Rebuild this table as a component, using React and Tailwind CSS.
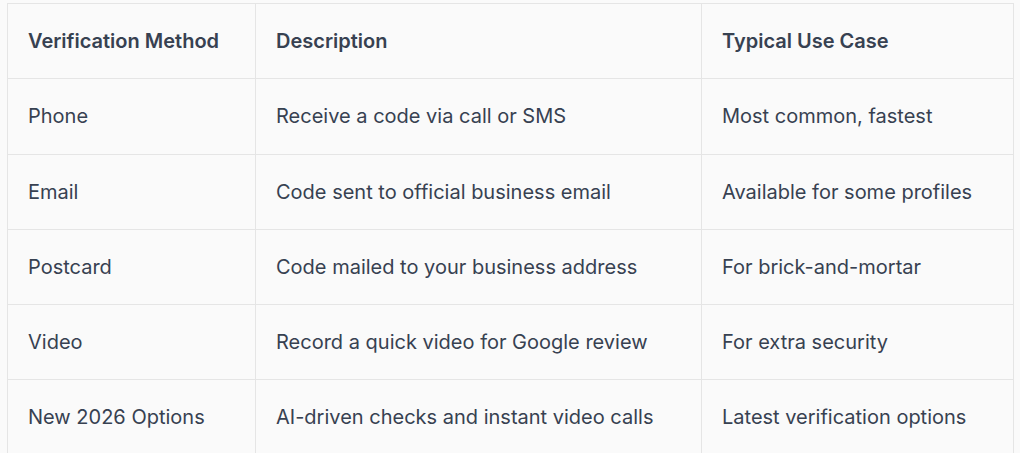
export default function App() {
  const rows = [
    ["Phone", "Receive a code via call or SMS", "Most common, fastest"],
    ["Email", "Code sent to official business email", "Available for some profiles"],
    ["Postcard", "Code mailed to your business address", "For brick-and-mortar"],
    ["Video", "Record a quick video for Google review", "For extra security"],
    ["New 2026 Options", "AI-driven checks and instant video calls", "Latest verification options"],
  ];
  const cell = "border border-[#e5e5e5] px-[20px] h-[75.25px] align-middle text-left";
  return (
    <div className="w-[1020px] h-[453px] overflow-hidden bg-[#fafafa] pl-[7px] pt-[3px] text-[#374151] text-[20px] font-['Inter',sans-serif]">
      <table className="border-collapse table-fixed w-[1006px]">
        <colgroup>
          <col className="w-[248px]" />
          <col className="w-[446px]" />
          <col className="w-[312px]" />
        </colgroup>
        <thead>
          <tr>
            <th className={cell + " font-semibold"}>Verification Method</th>
            <th className={cell + " font-semibold"}>Description</th>
            <th className={cell + " font-semibold"}>Typical Use Case</th>
          </tr>
        </thead>
        <tbody>
          {rows.map((r, i) => (
            <tr key={i}>
              {r.map((c, j) => (
                <td key={j} className={cell + " font-normal"}>{c}</td>
              ))}
            </tr>
          ))}
        </tbody>
      </table>
    </div>
  );
}
